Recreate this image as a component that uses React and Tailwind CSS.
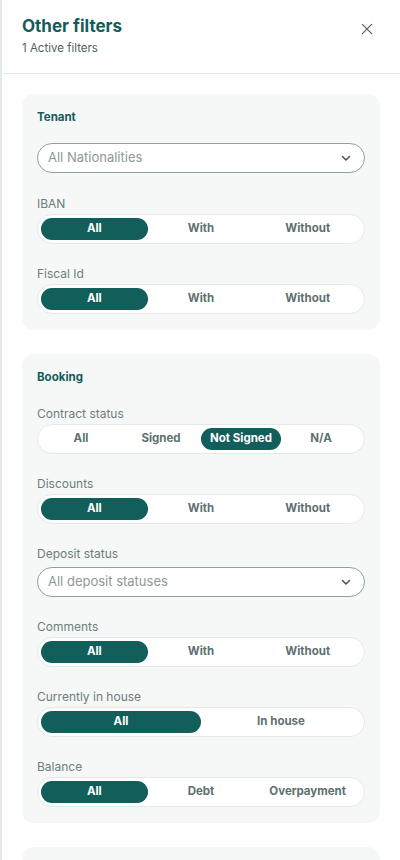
const Segmented = ({ options, active }) => {
  return (
    <div className="flex h-[30px] p-[3px] bg-white border border-[#e3e9e9] rounded-full">
      {options.map((opt) => (
        <div
          key={opt}
          className={
            opt === active
              ? "flex-1 flex items-center justify-center rounded-full bg-[#115e5b] text-white text-[11.5px] font-bold"
              : "flex-1 flex items-center justify-center rounded-full text-[#5d716f] text-[11.5px] font-bold"
          }
        >
          {opt}
        </div>
      ))}
    </div>
  );
};

const Chevron = () => (
  <svg className="w-[12px] h-[12px] text-[#3f5756]" fill="none" stroke="currentColor" viewBox="0 0 24 24">
    <path strokeLinecap="round" strokeLinejoin="round" strokeWidth={3} d="M5 9l7 7 7-7" />
  </svg>
);

const Select = ({ placeholder }) => (
  <div className="flex items-center justify-between h-[30px] pl-[10px] pr-[12px] bg-white border border-[#8fa09f] rounded-full">
    <span className="text-[13px] text-[#8d9898]">{placeholder}</span>
    <Chevron />
  </div>
);

const Field = ({ label, children, first }) => (
  <div className={first ? "" : "mt-[23px]"}>
    <div className="text-[12px] leading-[14px] text-[#6d7d7c] mb-[3px]">{label}</div>
    {children}
  </div>
);

const Card = ({ title, children }) => (
  <div className="bg-[#f6f8f8] rounded-[12px] px-[15px] pt-[16px] pb-[16px]">
    <div className="text-[11.5px] leading-[14px] font-bold text-[#145c59]">{title}</div>
    {children}
  </div>
);

export default function App() {
  return (
    <div
      className="w-[400px] h-[860px] overflow-hidden bg-white border-l-2 border-[#e1e9ec]"
      style={{ fontFamily: "Inter, 'Noto Sans', sans-serif" }}
    >
      {/* Header */}
      <div className="flex justify-between items-start h-[74px] px-[20px] pt-[15px] border-b border-[#e0e8ea]">
        <div>
          <h1 className="text-[17px] leading-[22px] font-bold text-[#145c59]">Other filters</h1>
          <p className="text-[11.5px] leading-[14px] text-[#4f5f5e] mt-[4px]">1 Active filters</p>
        </div>
        <button className="mt-[7px] mr-[6px] text-[#4a6261]">
          <svg className="w-[14px] h-[14px]" fill="none" stroke="currentColor" viewBox="0 0 24 24">
            <path strokeLinecap="round" strokeWidth={2} d="M4 4l16 16M20 4L4 20" />
          </svg>
        </button>
      </div>

      {/* Content */}
      <div className="px-[20px] pt-[20px] flex flex-col gap-[24px]">
        <Card title="Tenant">
          <div className="mt-[19px]">
            <Select placeholder="All Nationalities" />
          </div>
          <div className="mt-[24px]">
            <Field label="IBAN" first>
              <Segmented options={["All", "With", "Without"]} active="All" />
            </Field>
            <Field label="Fiscal Id">
              <Segmented options={["All", "With", "Without"]} active="All" />
            </Field>
          </div>
        </Card>

        <Card title="Booking">
          <div className="mt-[23px]">
            <Field label="Contract status" first>
              <Segmented options={["All", "Signed", "Not Signed", "N/A"]} active="Not Signed" />
            </Field>
            <Field label="Discounts">
              <Segmented options={["All", "With", "Without"]} active="All" />
            </Field>
            <Field label="Deposit status">
              <div className="mt-[6px]">
                <Select placeholder="All deposit statuses" />
              </div>
            </Field>
            <Field label="Comments">
              <Segmented options={["All", "With", "Without"]} active="All" />
            </Field>
            <Field label="Currently in house">
              <Segmented options={["All", "In house"]} active="All" />
            </Field>
            <Field label="Balance">
              <Segmented options={["All", "Debt", "Overpayment"]} active="All" />
            </Field>
          </div>
        </Card>

        <div className="bg-[#f6f8f8] rounded-[12px] h-[200px]" />
      </div>
    </div>
  );
}
